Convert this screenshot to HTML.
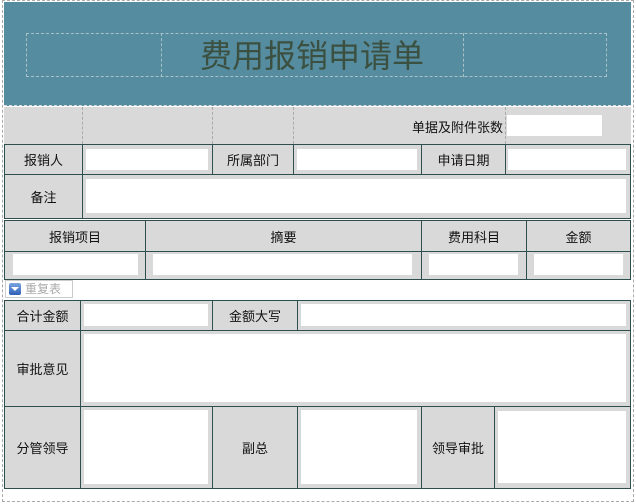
<!DOCTYPE html>
<html><head><meta charset="utf-8"><style>
*{margin:0;padding:0;box-sizing:border-box}
body{width:636px;height:504px;background:#fff;position:relative;overflow:hidden;font-family:"Liberation Sans","Noto Sans CJK SC",sans-serif;font-size:13px;color:#111}
.a{position:absolute}
.c{position:absolute;background:#d9d9d9;border:1px solid #2f4f4f;display:flex;align-items:center;justify-content:center}
.i{position:absolute;background:#fff}
.d{position:absolute;border-left:1px dashed #aaa}
</style></head><body>
<div class="a" style="left:2px;top:0;width:632px;height:502px;border:1px dashed #aaa"></div>
<div class="a" style="left:4px;top:2px;width:627px;height:104px;background:#558c9f;border-bottom:1px dashed #ddd"></div>
<div class="a" style="left:26px;top:33px;width:581px;height:44px;border:1px dashed #a9c2c8"></div>
<div class="a" style="left:161px;top:33px;height:44px;border-left:1px dashed #a9c2c8"></div>
<div class="a" style="left:463px;top:33px;height:44px;border-left:1px dashed #a9c2c8"></div>
<div class="a" style="left:161px;top:34px;width:302px;height:44px;font-size:32px;color:#3b5040;text-align:center;line-height:44px">费用报销申请单</div>

<div class="a" style="left:4px;top:107px;width:627px;height:37px;background:#d9d9d9"></div>
<div class="d" style="left:82px;top:107px;height:37px"></div>
<div class="d" style="left:212px;top:107px;height:37px"></div>
<div class="d" style="left:293px;top:107px;height:37px"></div>
<div class="d" style="left:505px;top:107px;height:37px"></div>
<div class="a" style="left:380px;top:117px;width:123px;text-align:right">单据及附件张数</div>
<div class="i" style="left:507px;top:115px;width:95px;height:21px"></div>

<div class="c" style="left:4px;top:144px;width:79px;height:31px">报销人</div>
<div class="c" style="left:82px;top:144px;width:131px;height:31px"></div>
<div class="i" style="left:86px;top:149px;width:122px;height:21px"></div>
<div class="c" style="left:212px;top:144px;width:82px;height:31px">所属部门</div>
<div class="c" style="left:293px;top:144px;width:129px;height:31px"></div>
<div class="i" style="left:297px;top:149px;width:120px;height:21px"></div>
<div class="c" style="left:421px;top:144px;width:85px;height:31px">申请日期</div>
<div class="c" style="left:505px;top:144px;width:126px;height:31px"></div>
<div class="i" style="left:508px;top:149px;width:118px;height:21px"></div>
<div class="c" style="left:4px;top:174px;width:79px;height:45px">备注</div>
<div class="c" style="left:82px;top:174px;width:549px;height:45px"></div>
<div class="i" style="left:86px;top:179px;width:540px;height:34px"></div>

<div class="c" style="left:4px;top:220px;width:142px;height:32px">报销项目</div>
<div class="c" style="left:145px;top:220px;width:277px;height:32px">摘要</div>
<div class="c" style="left:421px;top:220px;width:106px;height:32px">费用科目</div>
<div class="c" style="left:526px;top:220px;width:105px;height:32px">金额</div>
<div class="c" style="left:4px;top:251px;width:142px;height:29px"></div>
<div class="i" style="left:13px;top:254px;width:125px;height:21px"></div>
<div class="c" style="left:145px;top:251px;width:277px;height:29px"></div>
<div class="i" style="left:153px;top:254px;width:259px;height:21px"></div>
<div class="c" style="left:421px;top:251px;width:106px;height:29px"></div>
<div class="i" style="left:429px;top:254px;width:89px;height:21px"></div>
<div class="c" style="left:526px;top:251px;width:105px;height:29px"></div>
<div class="i" style="left:534px;top:254px;width:89px;height:21px"></div>

<div class="a" style="left:5px;top:280px;width:68px;height:18px;border:1px solid #ccc;color:#aaa;font-size:12px;line-height:16px;padding-left:19px">重复表</div>
<div class="a" style="left:9px;top:283px;width:12px;height:12px;background:linear-gradient(#7aa6e0,#2f5fb8);border-radius:2px"></div>
<div class="a" style="left:11px;top:287px;width:0;height:0;border-left:4px solid transparent;border-right:4px solid transparent;border-top:4px solid #fff"></div>

<div class="c" style="left:4px;top:300px;width:77px;height:31px">合计金额</div>
<div class="c" style="left:80px;top:300px;width:133px;height:31px"></div>
<div class="i" style="left:84px;top:304px;width:124px;height:22px"></div>
<div class="c" style="left:212px;top:300px;width:86px;height:31px">金额大写</div>
<div class="c" style="left:297px;top:300px;width:334px;height:31px"></div>
<div class="i" style="left:301px;top:304px;width:325px;height:22px"></div>
<div class="c" style="left:4px;top:330px;width:77px;height:77px">审批意见</div>
<div class="c" style="left:80px;top:330px;width:551px;height:77px"></div>
<div class="i" style="left:84px;top:334px;width:542px;height:68px"></div>
<div class="c" style="left:4px;top:406px;width:77px;height:83px">分管领导</div>
<div class="c" style="left:80px;top:406px;width:133px;height:83px"></div>
<div class="i" style="left:84px;top:410px;width:124px;height:74px"></div>
<div class="c" style="left:212px;top:406px;width:86px;height:83px">副总</div>
<div class="c" style="left:297px;top:406px;width:125px;height:83px"></div>
<div class="i" style="left:301px;top:410px;width:116px;height:74px"></div>
<div class="c" style="left:421px;top:406px;width:74px;height:83px">领导审批</div>
<div class="c" style="left:494px;top:406px;width:137px;height:83px"></div>
<div class="i" style="left:498px;top:411px;width:128px;height:72px"></div>
</body></html>
